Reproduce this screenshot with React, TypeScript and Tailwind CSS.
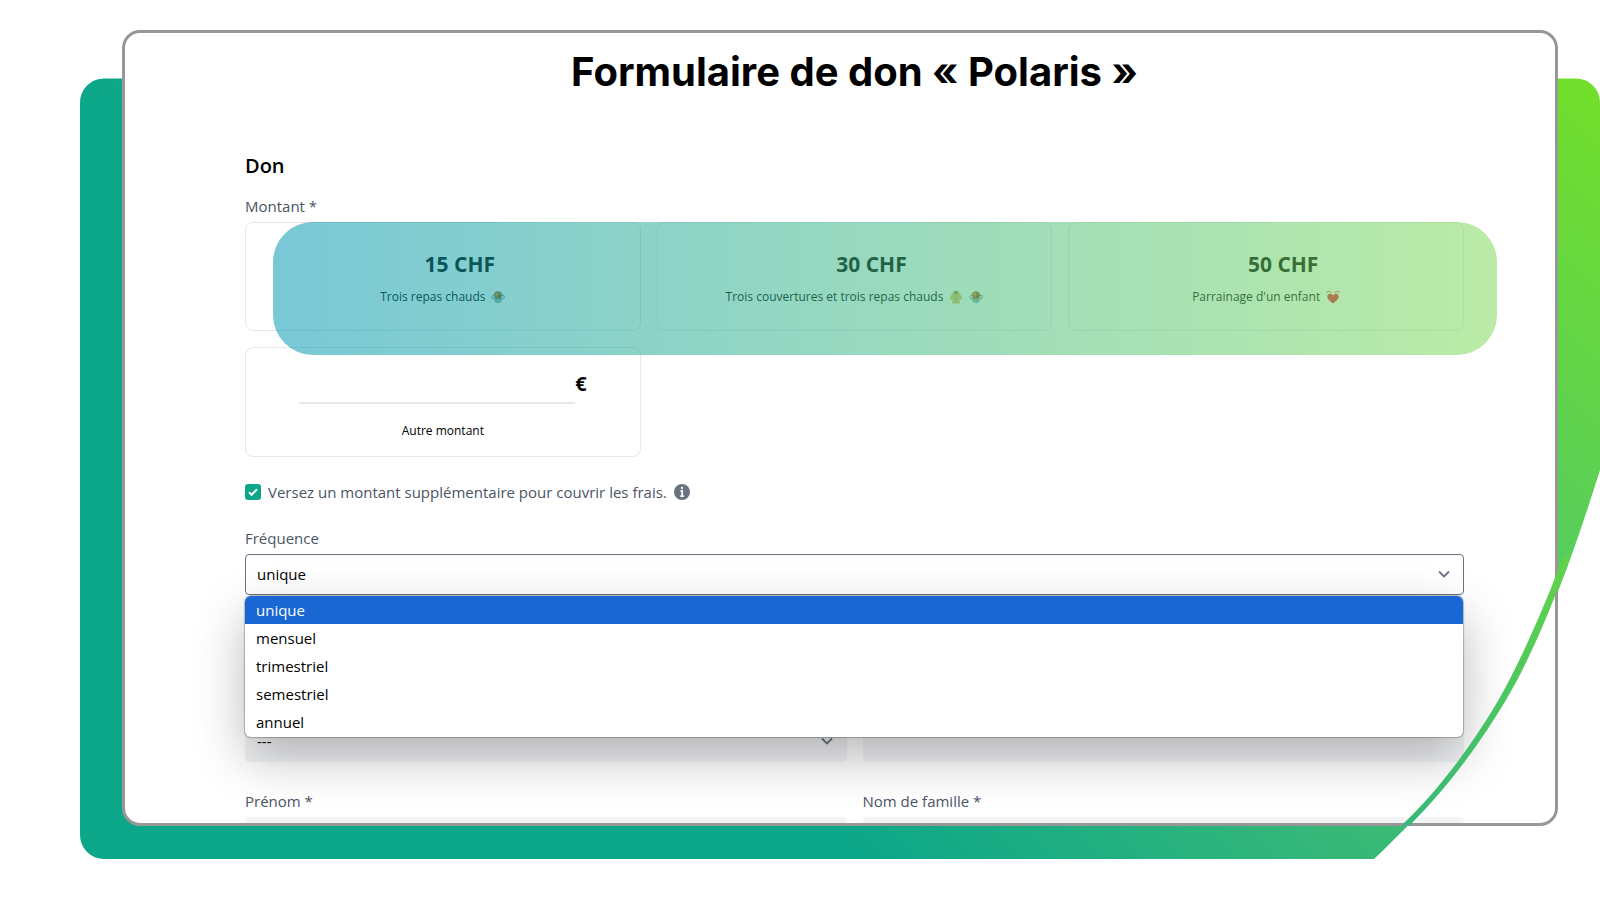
import React from 'react';
import { clsx } from 'clsx';

interface Amount {
  value: string;
  label: string;
  icons: React.ElementType[];
}

const StewIcon = () => (
  <svg viewBox="0 0 16 16" className="size-[14px]" aria-hidden="true">
    <ellipse cx="8" cy="8" rx="7.2" ry="3" fill="none" stroke="#6f9dad" strokeWidth="1.2" />
    <path d="M3 8.500h10c0 4-2 6.500-5 6.500s-5-2.500-5-6.500z" fill="#8fb0b8" />
    <circle cx="8" cy="6" r="4.600" fill="#b0682a" />
    <circle cx="6.500" cy="4.800" r="1.500" fill="#e8962e" />
    <circle cx="9.500" cy="7" r="1.400" fill="#5c5a1c" />
  </svg>
);

const CoatIcon = () => (
  <svg viewBox="0 0 16 16" className="size-[14px]" aria-hidden="true">
    <path d="M5.500 1h5l2 3.500L15.500 9l-2 2-1.500-1 .5 5.500h-9L4 10l-1.500 1-2-2 3-4.500z" fill="#dcc468" />
    <path d="M6 1h4v3L8 5.500 6 4z" fill="#a08a4c" />
    <path d="M8 6v9M5 11h2M9 11h2" stroke="#c4ac50" />
  </svg>
);

const HeartIcon = () => (
  <svg viewBox="0 0 16 16" className="size-[14px]" aria-hidden="true">
    <path
      d="M8 15.500C3.500 12 1.500 10 1.500 7.300c0-3.300 4.500-4.300 6.500-1 2-3.300 6.500-2.300 6.500 1C14.500 10 12.500 12 8 15.500z"
      fill="#ed1c36"
    />
    <path d="M.5 3C2 1 4.500 1 6.500 3M15.500 3c-1.500-2-4-2-6 0" fill="none" stroke="#e58a80" strokeWidth="1.500" />
  </svg>
);

const amounts: Amount[] = [
  { value: '15 CHF', label: 'Trois repas chauds', icons: [StewIcon] },
  { value: '30 CHF', label: 'Trois couvertures et trois repas chauds', icons: [CoatIcon, StewIcon] },
  { value: '50 CHF', label: "Parrainage d'un enfant", icons: [HeartIcon] },
];

const frequencies = ['unique', 'mensuel', 'trimestriel', 'semestriel', 'annuel'];

const Chevron = () => (
  <svg viewBox="0 0 20 20" className="pointer-events-none absolute top-[10px] right-[10px] size-5" aria-hidden="true">
    <path d="M5 7.500l5 5 5-5" fill="none" stroke="#6b7280" strokeWidth="1.800" />
  </svg>
);

const Backdrop = () => (
  <svg viewBox="0 0 1600 900" preserveAspectRatio="none" className="absolute inset-0 h-full w-full" aria-hidden="true">
    <defs>
      <linearGradient id="backdrop" gradientUnits="userSpaceOnUse" x1="850" y1="840" x2="1605" y2="85">
        <stop offset="0" stopColor="#0ca789" />
        <stop offset="0.33" stopColor="#37b878" />
        <stop offset="0.66" stopColor="#57cd5c" />
        <stop offset="1" stopColor="#73df29" />
      </linearGradient>
    </defs>
    <path
      d="M104 78.500H1576a24 24 0 0 1 24 24V470C1576 546 1550 623 1510 693C1475 755 1424 812 1374 859H104a24 24 0 0 1-24-24V102.500a24 24 0 0 1 24-24z"
      fill="url(#backdrop)"
    />
  </svg>
);

const Swoosh = () => (
  <svg
    viewBox="0 0 1600 900"
    preserveAspectRatio="none"
    className="pointer-events-none absolute inset-0 z-20 h-full w-full"
    aria-hidden="true"
  >
    <defs>
      <linearGradient id="swoosh" gradientUnits="userSpaceOnUse" x1="1400" y1="830" x2="1568" y2="570">
        <stop offset="0" stopColor="#35b77b" />
        <stop offset="1" stopColor="#60d34a" />
      </linearGradient>
    </defs>
    <path
      d="M1570 557C1554 600 1534 651 1510 693C1478 749 1440 795 1410 825L1401 826C1435 794 1472 747 1503 692C1528 645 1547 600 1563 557z"
      fill="url(#swoosh)"
    />
  </svg>
);

const labelClass = 'mb-1 block text-[15px] leading-[23px] text-gray-600';
const fieldClass = 'block h-[41px] w-full appearance-none rounded bg-gray-100 px-3 text-[15px]';

export default function App() {
  return (
    <main className="relative h-screen min-h-[600px] overflow-hidden bg-white pt-[30px] pr-[42px] pb-[74px] pl-[122px] font-['Open_Sans','Noto_Sans',sans-serif] text-black">
      <Backdrop />
      <section className="relative h-full overflow-hidden rounded-[18px] border-[3px] border-[#979797] bg-white pr-[91px] pl-[120px]">
        <h1 className="mt-[15px] text-center font-['Inter',sans-serif] text-[40px] leading-[48px] font-bold">
          Formulaire de don « Polaris »
        </h1>

        <form>
          <h2 className="mt-14 text-xl leading-7 font-semibold">Don</h2>

          <fieldset className="relative mt-[15px]">
            <legend className={labelClass}>Montant *</legend>
            <div className="grid grid-cols-3 gap-4">
              {amounts.map((amount) => (
                <button
                  key={amount.value}
                  type="button"
                  className="flex h-[109px] flex-col items-center rounded-lg border border-gray-200 pt-[27px]"
                >
                  <span className="pl-[34px] text-[21px] leading-7 font-bold">{amount.value}</span>
                  <span className="mt-[9px] flex items-center gap-1.5 text-xs leading-5">
                    {amount.label}
                    {amount.icons.map((Icon, i) => (
                      <Icon key={i} />
                    ))}
                  </span>
                </button>
              ))}
              <div className="flex h-[110px] flex-col rounded-lg border border-gray-200 px-[53px] pt-4">
                <div className="flex items-center">
                  <input
                    id="other-amount"
                    type="text"
                    className="h-10 min-w-0 flex-1 border-b-2 border-gray-200 text-right text-xl"
                  />
                  <span className="text-xl leading-7 font-bold">€</span>
                </div>
                <label htmlFor="other-amount" className="mt-[17px] text-center text-xs leading-5">
                  Autre montant
                </label>
              </div>
            </div>
            <div className="pointer-events-none absolute top-0 -right-[33px] left-7 h-[133px] rounded-[40px] bg-[linear-gradient(to_right,#0097b2,#7ed957)] opacity-53" />
          </fieldset>

          <div className="mt-[23px] flex items-center">
            <span className="relative size-4">
              <input
                id="fees"
                type="checkbox"
                defaultChecked
                className="block size-4 appearance-none rounded-[3px] bg-[#0ca789]"
              />
              <svg viewBox="0 0 16 16" className="pointer-events-none absolute inset-0 size-4" aria-hidden="true">
                <path d="M4 8.300l2.600 2.500L12 5.300" fill="none" stroke="#fff" strokeWidth="2" />
              </svg>
            </span>
            <label htmlFor="fees" className="ml-[7px] text-[15px] leading-6 text-gray-600">
              Versez un montant supplémentaire pour couvrir les frais.
            </label>
            <svg viewBox="0 0 16 16" className="ml-[7px] size-4" aria-hidden="true">
              <circle cx="8" cy="8" r="8" fill="#6b7280" />
              <path d="M8 2.800v2.200M6.500 7H8.200v5M6.300 12.200h3.600" fill="none" stroke="#fff" strokeWidth="1.800" />
            </svg>
          </div>

          <div className="relative mt-[23px]">
            <label htmlFor="frequency" className={labelClass}>
              Fréquence
            </label>
            <div className="relative">
              <select
                id="frequency"
                className="block h-[41px] w-full appearance-none rounded border border-gray-500 bg-white px-[11px] text-[15px]"
              >
                {frequencies.map((frequency) => (
                  <option key={frequency}>{frequency}</option>
                ))}
              </select>
              <Chevron />
            </div>
            <ul
              role="listbox"
              className="absolute top-full right-px left-0 z-10 mt-px overflow-hidden rounded-md bg-white pb-px text-[15px] leading-7 shadow-[0_0_1px_1px_rgba(0,0,0,0.25),0_20px_50px_rgba(0,0,0,0.28)]"
            >
              {frequencies.map((frequency, i) => (
                <li
                  key={frequency}
                  role="option"
                  aria-selected={i === 0}
                  className={clsx('px-[11px]', i === 0 && 'bg-[#1967d2] text-white')}
                >
                  {frequency}
                </li>
              ))}
            </ul>
          </div>

          <div className="mt-[126px] grid grid-cols-2 gap-x-4 gap-y-7">
            <div className="relative">
              <select aria-label="---" className={fieldClass}>
                <option>---</option>
              </select>
              <Chevron />
            </div>
            <input type="text" aria-label="---" className={fieldClass} />
            <div>
              <label htmlFor="first-name" className={labelClass}>
                Prénom *
              </label>
              <input id="first-name" type="text" className={fieldClass} />
            </div>
            <div>
              <label htmlFor="last-name" className={labelClass}>
                Nom de famille *
              </label>
              <input id="last-name" type="text" className={fieldClass} />
            </div>
          </div>
        </form>
      </section>
      <Swoosh />
    </main>
  );
}
